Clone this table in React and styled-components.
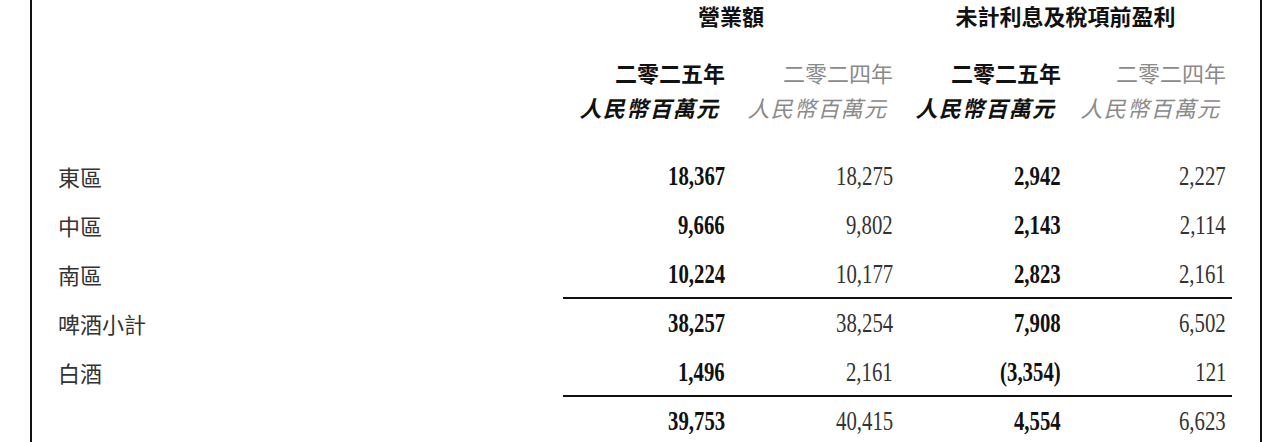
import React from "react";
import styled, { createGlobalStyle } from "styled-components";

const Global = createGlobalStyle`
  html, body { margin: 0; padding: 0; background: #fff; }
  body { overflow: hidden; }
`;

const Page = styled.div`
  width: 1269px;
  height: 442px;
  overflow: hidden;
  background: #fff;
`;

const Frame = styled.div`
  margin-left: 30px;
  width: 1228px;
  height: 442px;
  border-left: 2px solid #111;
  border-right: 2px solid #111;
`;

const Table = styled.div`
  display: grid;
  grid-template-columns: 531px 168px 168px 168px 165px;
  grid-template-rows: 32px 26px 28px 42px 23.5px repeat(6, 49px);
  align-items: center;
`;

const cjk = `"Noto Sans CJK TC", "Noto Sans CJK SC", sans-serif`;

const GroupHead = styled.div`
  grid-column: ${(p) => p.$col} / span 2;
  grid-row: 1;
  align-self: start;
  text-align: center;
  font-family: ${cjk};
  font-weight: 700;
  font-size: 22px;
  line-height: 30px;
  color: #111;
`;

const YearHead = styled.div`
  grid-row: 3;
  grid-column: ${(p) => p.$col};
  text-align: right;
  padding-right: 6px;
  font-family: ${cjk};
  font-size: 22px;
  line-height: 28px;
  font-weight: ${(p) => (p.$current ? 700 : 400)};
  color: ${(p) => (p.$current ? "#111" : "#8a8a8a")};
`;

const UnitHead = styled.div`
  grid-row: 4;
  grid-column: ${(p) => p.$col};
  align-self: end;
  padding-bottom: 7px;
  text-align: right;
  padding-right: 9px;
`;

const Slant = styled.span`
  display: inline-block;
  font-family: ${cjk};
  font-size: 22px;
  line-height: 28px;
  letter-spacing: 1.3px;
  font-weight: ${(p) => (p.$current ? 700 : 400)};
  color: ${(p) => (p.$current ? "#111" : "#8a8a8a")};
  transform: skewX(-14deg);
`;

const Label = styled.div`
  grid-column: 1;
  grid-row: ${(p) => p.$row};
  padding-left: 26px;
  font-family: ${cjk};
  font-size: 22px;
  line-height: 32px;
  color: #333;
  align-self: stretch;
  display: flex;
  align-items: center;
`;

const Cell = styled.div`
  grid-column: ${(p) => p.$col};
  grid-row: ${(p) => p.$row};
  align-self: stretch;
  display: flex;
  align-items: center;
  justify-content: flex-end;
  padding-right: 6px;
  border-top: ${(p) => (p.$rule ? "2px solid #111" : "0")};
  margin-top: ${(p) => (p.$rule ? "-2px" : "0")};
`;

const Num = styled.span`
  display: inline-block;
  font-family: "Liberation Serif", "Times New Roman", serif;
  font-size: 27px;
  line-height: 31px;
  font-weight: ${(p) => (p.$bold ? 700 : 400)};
  color: ${(p) => (p.$bold ? "#111" : "#333")};
  transform: scaleX(0.77);
  transform-origin: right center;
  white-space: nowrap;
`;

const rows = [
  { label: "東區", v: ["18,367", "18,275", "2,942", "2,227"] },
  { label: "中區", v: ["9,666", "9,802", "2,143", "2,114"] },
  { label: "南區", v: ["10,224", "10,177", "2,823", "2,161"] },
  { label: "啤酒小計", v: ["38,257", "38,254", "7,908", "6,502"], rule: true },
  { label: "白酒", v: ["1,496", "2,161", "(3,354)", "121"] },
  { label: "", v: ["39,753", "40,415", "4,554", "6,623"], rule: true },
];

const years = [
  { text: "二零二五年", current: true },
  { text: "二零二四年", current: false },
  { text: "二零二五年", current: true },
  { text: "二零二四年", current: false },
];

export default function App() {
  return (
    <Page>
      <Global />
      <Frame>
        <Table>
          <GroupHead $col={2}>營業額</GroupHead>
          <GroupHead $col={4}>未計利息及稅項前盈利</GroupHead>
          {years.map((y, i) => (
            <YearHead key={"y" + i} $col={i + 2} $current={y.current}>
              {y.text}
            </YearHead>
          ))}
          {years.map((y, i) => (
            <UnitHead key={"u" + i} $col={i + 2}>
              <Slant $current={y.current}>人民幣百萬元</Slant>
            </UnitHead>
          ))}
          {rows.map((r, ri) => (
            <React.Fragment key={ri}>
              <Label $row={ri + 6}>{r.label}</Label>
              {r.v.map((val, ci) => (
                <Cell key={ci} $col={ci + 2} $row={ri + 6} $rule={r.rule}>
                  <Num $bold={ci % 2 === 0}>{val}</Num>
                </Cell>
              ))}
            </React.Fragment>
          ))}
        </Table>
      </Frame>
    </Page>
  );
}
